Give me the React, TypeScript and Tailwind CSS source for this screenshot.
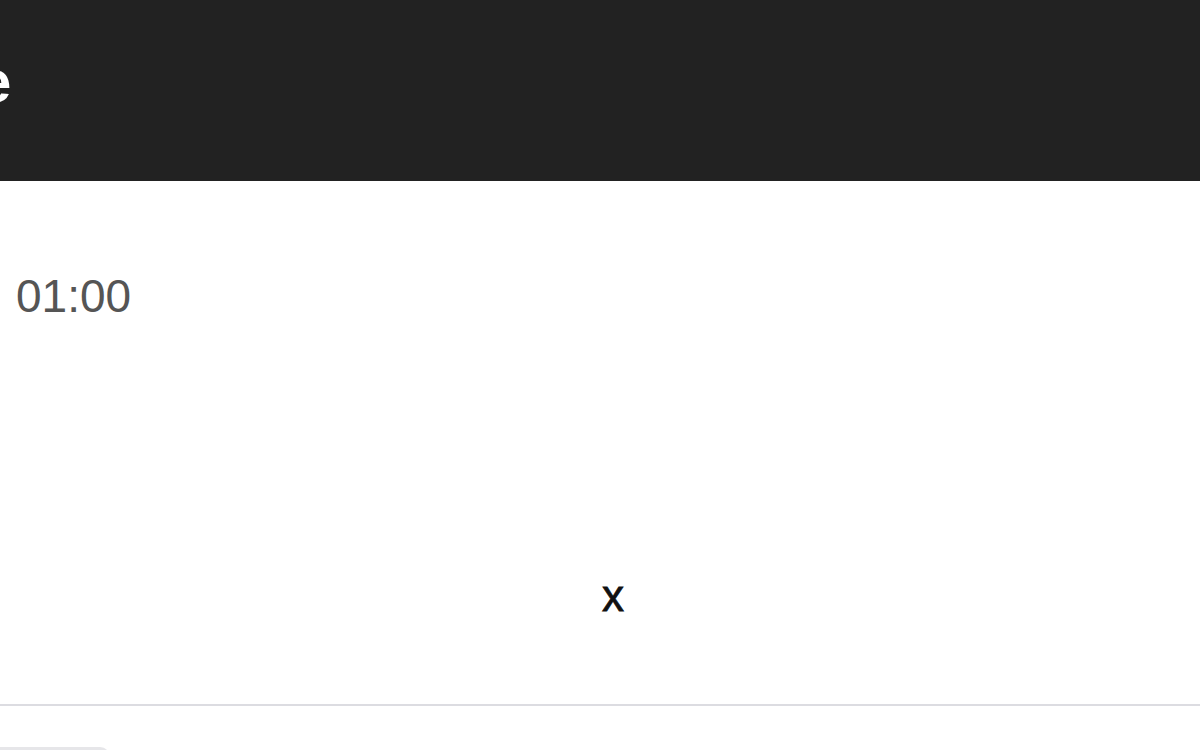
import React from "react";

export default function App() {
  return (
    <div className="w-[1200px] h-[750px] overflow-hidden bg-white" style={{ fontFamily: '"Liberation Sans", Arial, sans-serif' }}>
      <header className="h-[181px] bg-[#222222] overflow-hidden">
        <h1 className="ml-[-22px] pt-[52px] text-[60px] leading-[60px] font-bold text-white">e</h1>
      </header>
      <main className="h-[523px] flex flex-col">
        <div className="pl-[16px] pt-[91px] text-[46px] leading-[48px] text-[#555555]">01:00</div>
        <div className="flex-1 flex justify-center pl-[26px] pt-[254px]">
          <span className="text-[44px] leading-[44px] text-[#111111] [-webkit-text-stroke:0.8px_#111111]">x</span>
        </div>
      </main>
      <div className="h-[2px] bg-[#dcdce1]" />
      <div className="pt-[41px]">
        <div className="w-[110px] h-[20px] rounded-r-full bg-[#e6e6e9]" />
      </div>
    </div>
  );
}
